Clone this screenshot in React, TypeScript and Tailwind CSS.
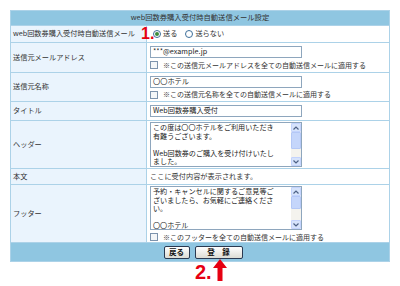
import React from "react";

function Scroll({ thumbH }: { thumbH: number }) {
  return (
    <div className="flex w-[10px] flex-col bg-[#f4f3ee]">
      <div className="flex h-[9px] items-center justify-center rounded-[1px] border border-[#c3d3fd] bg-[#d6e3fb]">
        <svg width="6" height="4" viewBox="0 0 6 4"><path d="M0.5 3.5 L3 1 L5.5 3.5" fill="none" stroke="#4d6185" strokeWidth="1.2" /></svg>
      </div>
      <div className="rounded-[1px] border border-[#b4c8f6] bg-[#c5d6fb]" style={{ height: thumbH }} />
      <div className="flex-1" />
      <div className="flex h-[9px] items-center justify-center rounded-[1px] border border-[#c3d3fd] bg-[#d6e3fb]">
        <svg width="6" height="4" viewBox="0 0 6 4"><path d="M0.5 0.5 L3 3 L5.5 0.5" fill="none" stroke="#4d6185" strokeWidth="1.2" /></svg>
      </div>
    </div>
  );
}

function TextArea({ lines, h, thumbH }: { lines: string[]; h: number; thumbH: number }) {
  return (
    <div className="flex w-[152px] border border-[#8ea6bd] bg-white" style={{ height: h }}>
      <div className="flex-1 overflow-hidden px-[2px] text-[7.1px] leading-[8.5px] text-[#222]">
        {lines.map((l, i) => (
          <div key={i} className="h-[8.5px] whitespace-nowrap">{l || "\u00a0"}</div>
        ))}
      </div>
      <Scroll thumbH={thumbH} />
    </div>
  );
}

function Input({ value }: { value: string }) {
  return (
    <div className="flex h-[12px] w-[152px] items-center border border-[#8ea6bd] bg-white px-[2px] text-[7.2px] leading-none text-[#222]">
      {value}
    </div>
  );
}

function Check({ label }: { label: string }) {
  return (
    <div className="mt-[3px] flex items-center">
      <div className="h-[8px] w-[8px] border border-[#7d93ad] bg-[#f4f6f8]" />
      <span className="ml-[5px] text-[7px] leading-none text-[#333]">{label}</span>
    </div>
  );
}

function Radio({ checked, label }: { checked: boolean; label: string }) {
  return (
    <div className="flex items-center">
      <div className="flex h-[8px] w-[8px] items-center justify-center rounded-full border border-[#3e6f9a] bg-white">
        {checked && <div className="h-[4px] w-[4px] rounded-full bg-[#3b8c3b]" />}
      </div>
      <span className="ml-[2px] text-[7.2px] leading-none text-[#333]">{label}</span>
    </div>
  );
}

function Row({ label, h, children }: { label: string; h: number; children: React.ReactNode }) {
  return (
    <div className="flex gap-px" style={{ height: h }}>
      <div className="flex w-[135px] items-center bg-[#eaf4fd] pl-[2px] text-[7.2px] leading-none text-[#333]">{label}</div>
      <div className="flex flex-1 flex-col justify-center bg-white pl-[3px]">{children}</div>
    </div>
  );
}

export default function App() {
  return (
    <div className="relative h-[286px] w-[400px] bg-white font-['Noto_Sans_CJK_JP',sans-serif]">
      <div className="ml-[10px] pt-[10px]">
        <div className="flex w-[380px] flex-col gap-px bg-[#acd2e8] p-px">
          <div className="flex h-[14px] items-center justify-center bg-[#8fc6e1] text-[7.3px] leading-none text-[#333]">
            web回数券購入受付時自動送信メール設定
          </div>
          <Row label="web回数券購入受付時自動送信メール" h={16}>
            <div className="flex items-center gap-[8px] pl-[3px]">
              <Radio checked label="送る" />
              <Radio checked={false} label="送らない" />
            </div>
          </Row>
          <Row label="送信元メールアドレス" h={29}>
            <Input value="***@example.jp" />
            <Check label="※この送信元メールアドレスを全ての自動送信メールに適用する" />
          </Row>
          <Row label="送信元名称" h={28}>
            <Input value="〇〇ホテル" />
            <Check label="※この送信元名称を全ての自動送信メールに適用する" />
          </Row>
          <Row label="タイトル" h={18}>
            <Input value="Web回数券購入受付" />
          </Row>
          <Row label="ヘッダー" h={47}>
            <TextArea
              h={45}
              thumbH={17}
              lines={["この度は〇〇ホテルをご利用いただき", "有難うございます。", "", "Web回数券のご購入を受け付けいたし", "ました。"]}
            />
          </Row>
          <Row label="本文" h={15}>
            <div className="text-[7.2px] leading-none text-[#333]">ここに受付内容が表示されます。</div>
          </Row>
          <Row label="フッター" h={57}>
            <TextArea
              h={44}
              thumbH={13}
              lines={["予約・キャンセルに関するご意見等ご", "ざいましたら、お気軽にご連絡くださ", "い。", "", "〇〇ホテル"]}
            />
            <Check label="※このフッターを全ての自動送信メールに適用する" />
          </Row>
          <div className="flex h-[18px] items-center justify-center gap-[5px] bg-[#8fc6e1] pl-[6px]">
            <button className="h-[13px] w-[26px] rounded-[2px] border border-[#2a3a52] bg-gradient-to-b from-[#ffffff] to-[#dcdcd4] text-[7.5px] leading-none font-bold text-[#111]">
              戻る
            </button>
            <button className="h-[13px] w-[48px] rounded-[2px] border border-[#2a3a52] bg-gradient-to-b from-[#ffffff] to-[#dcdcd4] text-[7.5px] leading-none font-bold text-[#111]">
              登　録
            </button>
          </div>
        </div>
      </div>
      <div className="absolute left-[141px] top-[26px] text-[16px] leading-none font-bold text-[#e60012] font-['Liberation_Sans',sans-serif]">
        1.
      </div>
      <div className="absolute left-[195px] top-[262px] flex items-start">
        <span className="text-[20px] leading-none font-bold text-[#e60012] font-['Liberation_Sans',sans-serif]">2.</span>
        <svg className="-mt-[3px] ml-[1px]" width="14" height="22" viewBox="0 0 14 22">
          <path d="M7 0 L14 9 L9.5 9 L9.5 22 L4.5 22 L4.5 9 L0 9 Z" fill="#e60012" />
        </svg>
      </div>
    </div>
  );
}
